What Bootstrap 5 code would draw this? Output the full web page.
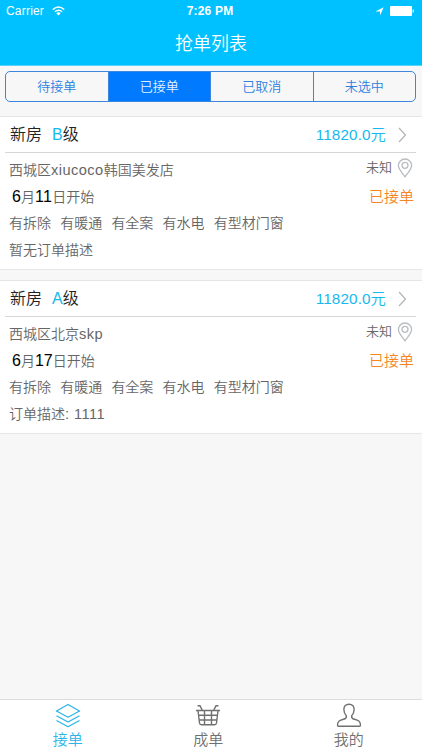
<!DOCTYPE html>
<html lang="zh-CN">
<head>
<meta charset="utf-8">
<meta name="viewport" content="width=device-width, initial-scale=1">
<title>抢单列表</title>
<link href="https://cdn.jsdelivr.net/npm/bootstrap@5.3.0/dist/css/bootstrap.min.css" rel="stylesheet">
<style>
body{font-family:"Liberation Sans","Noto Sans CJK SC",sans-serif;font-weight:350;background:#f7f7f7;height:750px;font-size:14px;line-height:20px;color:#666;overflow:hidden}
.app-head{height:66px;background:#00c1ff;border-bottom:1px solid #5ad3fb}
.status-bar{height:22px;font-size:12px;padding:0 8px 0 6px}
.status-bar>div{flex:1 1 0}
.carrier{letter-spacing:.2px}
.clock{font-weight:700;letter-spacing:.2px}
.page-title{font-size:18px;height:43px;line-height:44px;font-weight:350}
.seg{margin:5px 6px 0 5px;height:31px;border:1px solid #3d86de;border-radius:5px;overflow:hidden}
.seg a{font-size:13px;line-height:29px;color:#2f7fdf;border-right:1px solid #3d86de;text-decoration:none}
.seg a:last-child{border-right:0}
.seg a.active{background:#007aff;color:#e3f1ff}
.order{background:#fff;border-top:1px solid #e6e6e6;border-bottom:1px solid #e6e6e6;height:154px}
.order-first{margin-top:14px}
.order+.order{margin-top:10px}
.order-head{height:36px;margin:0 6px 0 5px;padding:0 9px 0 5px;border-bottom:1px solid #d6d6d6;color:#222;font-size:16px}
.sky{color:#16b9ee}
.grade{margin-left:10px}
.price{font-size:15.3px;letter-spacing:.1px;margin-right:12px}
.order-body{padding:4px 8px 0 9px}
.line{height:26.5px}
.latin{font-size:14.6px;letter-spacing:.45px}
.num{color:#000;font-size:16px;font-weight:400}
.num-day{letter-spacing:.4px}
.state{color:#f5861f;font-size:15px}
.dist{font-size:13px;padding-bottom:5px}
.pin{margin:0 1px 4px 5px}
.tags{gap:9.2px}
.date{padding-left:3px}
.tabs{height:51px;background:#fff;border-top:1px solid #dcdcdc}
.tabs-row{width:421.5px;margin-left:-2.5px}
.tabs a{font-size:15px;line-height:22px;color:#707070;text-decoration:none;padding-top:3px}
.tabs a.active{color:#2cb5ea}
svg{display:block;flex:none}
</style>
</head>
<body class="d-flex flex-column">
<header class="app-head text-white flex-shrink-0">
  <div class="status-bar d-flex align-items-center">
    <div class="d-flex align-items-center"><span class="carrier">Carrier</span>
      <svg class="ms-2" width="13" height="10" viewBox="0 0 13 10" fill="none" stroke="#fff" stroke-width="1.5"><path d="M.8 3.6Q6.5-1.6 12.2 3.6M2.9 5.8Q6.500 2.600 10.100 5.800"/><path d="M4.300 7.200Q6.500 5.400 8.700 7.200L6.500 9.500Z" fill="#fff" stroke="none"/></svg>
    </div>
    <span class="clock">7:26 PM</span>
    <div class="d-flex align-items-center justify-content-end">
      <svg width="9" height="9" viewBox="0 0 9 9" fill="#fff"><path d="M8.700.3 5 8.600V4.400H.4Z"/></svg>
      <svg class="ms-1" width="26" height="10" viewBox="0 0 26 10" fill="#fff"><rect x="2" width="22" height="10" rx="1"/><path d="M24.700 3.200Q26 3.500 26 5T24.700 6.800Z"/></svg>
    </div>
  </div>
  <h1 class="page-title text-center mb-0">抢单列表</h1>
</header>
<nav class="seg d-flex flex-shrink-0 text-center">
  <a href="#" class="col">待接单</a><a href="#" class="col active">已接单</a><a href="#" class="col">已取消</a><a href="#" class="col">未选中</a>
</nav>
<main class="flex-grow-1">
  <section class="order order-first">
    <div class="order-head d-flex align-items-center"><span>新房</span><span class="grade sky">B</span><span>级</span><span class="price sky ms-auto">11820.0元</span>
      <svg width="9" height="16" viewBox="0 0 9 16" fill="none" stroke="#b3b3b3" stroke-width="1.2"><path d="M1 1 7.500 8 1 15"/></svg></div>
    <div class="order-body">
      <div class="line d-flex align-items-center"><span>西城区<span class="latin">xiucoco</span>韩国美发店</span><span class="dist ms-auto">未知</span>
        <svg class="pin" width="16" height="20" viewBox="0 0 16 20" fill="none" stroke="#b9bdc1" stroke-width="1.3"><path d="M8 18.800C6 16 1.400 11.500 1.400 7.600a6.600 6.600 0 0 1 13.200 0C14.600 11.500 10 16 8 18.800Z"/><circle cx="8" cy="7.300" r="3"/></svg></div>
      <div class="line d-flex align-items-center"><span class="date"><b class="num">6</b>月<b class="num num-day">11</b>日开始</span><span class="state ms-auto">已接单</span></div>
      <div class="line tags d-flex align-items-center"><span>有拆除</span><span>有暖通</span><span>有全案</span><span>有水电</span><span>有型材门窗</span></div>
      <div class="line d-flex align-items-center">暂无订单描述</div>
    </div>
  </section>
  <section class="order">
    <div class="order-head d-flex align-items-center"><span>新房</span><span class="grade sky">A</span><span>级</span><span class="price sky ms-auto">11820.0元</span>
      <svg width="9" height="16" viewBox="0 0 9 16" fill="none" stroke="#b3b3b3" stroke-width="1.2"><path d="M1 1 7.500 8 1 15"/></svg></div>
    <div class="order-body">
      <div class="line d-flex align-items-center"><span>西城区北京<span class="latin">skp</span></span><span class="dist ms-auto">未知</span>
        <svg class="pin" width="16" height="20" viewBox="0 0 16 20" fill="none" stroke="#b9bdc1" stroke-width="1.3"><path d="M8 18.800C6 16 1.400 11.500 1.400 7.600a6.600 6.600 0 0 1 13.200 0C14.600 11.500 10 16 8 18.800Z"/><circle cx="8" cy="7.300" r="3"/></svg></div>
      <div class="line d-flex align-items-center"><span class="date"><b class="num">6</b>月<b class="num">17</b>日开始</span><span class="state ms-auto">已接单</span></div>
      <div class="line tags d-flex align-items-center"><span>有拆除</span><span>有暖通</span><span>有全案</span><span>有水电</span><span>有型材门窗</span></div>
      <div class="line d-flex align-items-center"><span>订单描述<span class="latin">: 1111</span></span></div>
    </div>
  </section>
</main>
<footer class="tabs flex-shrink-0">
  <div class="tabs-row d-flex text-center">
    <a href="#" class="col active d-flex flex-column align-items-center">
      <svg width="26" height="26" viewBox="0 0 26 26" fill="none" stroke="currentColor" stroke-width="1.3" stroke-linejoin="round"><path d="M13 1.500 24.500 8 13 14.200 1.500 8ZM1.500 8V8.800M24.500 8V8.800M1.500 12.800 13 19 24.500 12.800M1.500 17.500 13 23.700 24.500 17.500"/></svg><span>接单</span></a>
    <a href="#" class="col d-flex flex-column align-items-center">
      <svg width="26" height="26" viewBox="0 0 26 26" fill="none" stroke="currentColor" stroke-width="1.4"><path d="M1 7.500H25M3 7.500 4.500 20Q4.800 21.700 6.300 21.700H19.700Q21.200 21.700 21.500 20L23 7.500M3.800 12.300H22.200M4.400 17H21.600M9.500 7.500V21.700M16.500 7.500V21.700M2.500 2.800H5L7.500 7.500M23.500 2.800H21L18.500 7.500"/></svg><span>成单</span></a>
    <a href="#" class="col d-flex flex-column align-items-center">
      <svg width="26" height="26" viewBox="0 0 26 26" fill="none" stroke="currentColor" stroke-width="1.4"><path d="M13 1.200C9.500 1.200 7.700 3.500 7.900 6.800C8 9.500 9 11.500 10.300 12.800C10.700 14.800 9.800 15.700 7.500 16.300C4 17.200 1.500 18 1.500 22.200Q1.500 23.200 2.500 23.200H23.500Q24.500 23.200 24.500 22.200C24.500 18 22 17.200 18.500 16.300C16.200 15.700 15.300 14.800 15.700 12.800C17 11.500 18 9.500 18.100 6.800C18.300 3.500 16.500 1.200 13 1.200Z"/></svg><span>我的</span></a>
  </div>
</footer>
<script src="https://cdn.jsdelivr.net/npm/bootstrap@5.3.0/dist/js/bootstrap.bundle.min.js"></script>
</body>
</html>
